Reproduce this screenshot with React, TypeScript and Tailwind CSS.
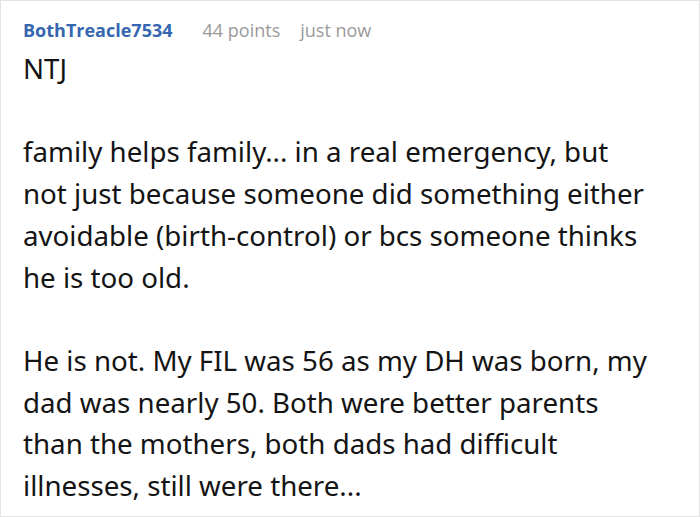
export default function App() {
  return (
    <div className="w-[700px] h-[517px] bg-white border border-[#e3e3e3] overflow-hidden" style={{ fontFamily: '"Noto Sans", sans-serif' }}>
      <div className="pl-[22px] pr-[40px] pt-[15px]">
        <div className="flex items-baseline gap-[30px] text-[18px] leading-[28px]" style={{ fontFamily: '"Open Sans", sans-serif' }}>
          <span className="font-bold text-[#3566af]">BothTreacle7534</span>
          <span className="text-[#9a9a9a] flex gap-[20px]"><span>44 points</span><span>just now</span></span>
        </div>
        <div className="text-[27.7px] leading-[41.7px] text-[#141414] mt-[4px]">
          <p>NTJ</p>
          <p className="mt-[41.7px]">family helps family... in a real emergency, but not just because someone did something either avoidable (birth-control) or bcs someone thinks he is too old.</p>
          <p className="mt-[41.7px]">He is not. My FIL was 56 as my DH was born, my dad was nearly 50. Both were better parents than the mothers, both dads had difficult illnesses, still were there...</p>
        </div>
      </div>
    </div>
  );
}
